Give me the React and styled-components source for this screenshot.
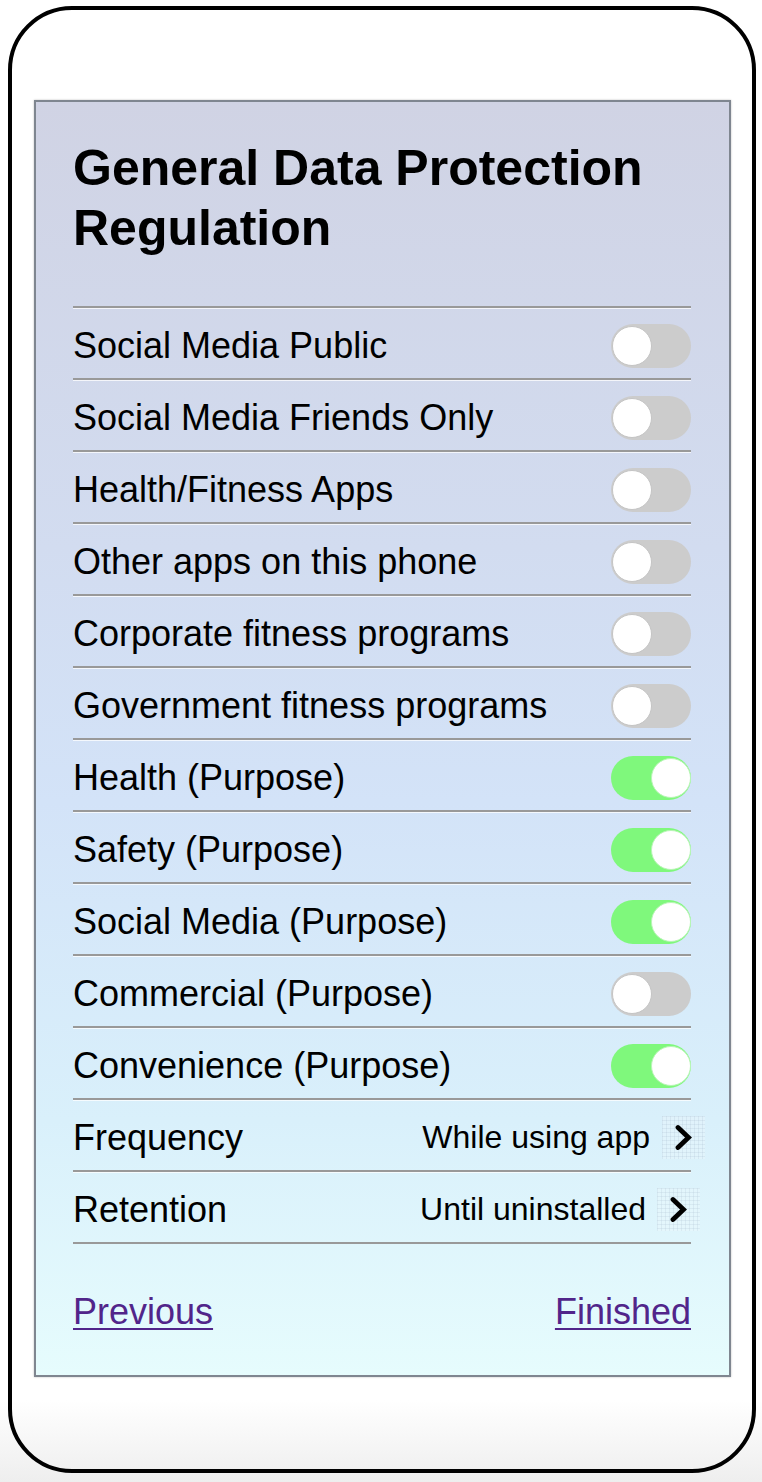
import React, { useState } from "react";
import styled, { createGlobalStyle } from "styled-components";

const GlobalStyle = createGlobalStyle`
  html, body {
    margin: 0;
    padding: 0;
  }
  body {
    min-height: 1482px;
    font-family: "Liberation Sans", Arial, Helvetica, sans-serif;
    background: linear-gradient(to bottom, #ffffff 0, #ffffff 1400px, #eeeeee 1482px);
  }
`;

const Phone = styled.div`
  box-sizing: border-box;
  width: 748px;
  height: 1467px;
  margin: 6px 0 0 8px;
  padding: 90px 0 0 22px;
  border: 4px solid #000;
  border-radius: 64px;
`;

const Panel = styled.div`
  box-sizing: border-box;
  width: 697px;
  padding: 36px 38px 42px 37px;
  border: 2px solid #7f8690;
  box-shadow: 0 0 2px rgba(0, 0, 0, 0.25);
  background: linear-gradient(
    to bottom,
    #d0d3e4 0%,
    #d2dcf0 35%,
    #d3e3f8 55%,
    #d9f0fb 80%,
    #e6fcfd 100%
  );
`;

const Title = styled.h1`
  margin: 0 0 48px;
  font-size: 50px;
  line-height: 60px;
  font-weight: 700;
  color: #000;
`;

const List = styled.div`
  border-top: 2px solid #999;
`;

const Row = styled.div`
  display: flex;
  align-items: center;
  justify-content: space-between;
  height: 70px;
  border-bottom: 2px solid #999;
  box-shadow: inset 0 1px 0 rgba(255, 255, 255, 0.75);
`;

const Label = styled.span`
  padding-top: 5px;
  font-size: 36px;
  color: #000;
  white-space: nowrap;
`;

const Track = styled.button`
  position: relative;
  box-sizing: border-box;
  width: 80px;
  height: 44px;
  margin-top: 6px;
  padding: 0;
  border: none;
  border-radius: 22px;
  background: ${(p) => (p.$on ? "#7ff87c" : "#cccccc")};
  cursor: pointer;
`;

const Knob = styled.span`
  position: absolute;
  top: 2px;
  left: ${(p) => (p.$on ? "40px" : "1px")};
  box-sizing: border-box;
  width: 40px;
  height: 40px;
  border-radius: 50%;
  background: #fff;
  border: 1px solid ${(p) => (p.$on ? "#b8f5b5" : "#c4c4c4")};
`;

const Value = styled.div`
  display: flex;
  align-items: center;
  margin-right: -14px;
  padding-top: 5px;
`;

const ValueText = styled.span`
  font-size: 32px;
  color: #000;
  white-space: nowrap;
`;

const ChevronBox = styled.span`
  display: flex;
  align-items: center;
  justify-content: center;
  width: 43px;
  height: 43px;
  margin-left: ${(p) => p.$gap}px;
  margin-right: ${(p) => p.$shift}px;
  background-color: rgba(255, 255, 255, 0.18);
  background-image: repeating-linear-gradient(
      to right,
      rgba(140, 160, 185, 0.14) 0 1px,
      transparent 1px 4px
    ),
    repeating-linear-gradient(
      to bottom,
      rgba(140, 160, 185, 0.14) 0 1px,
      transparent 1px 4px
    );
`;

const Footer = styled.div`
  display: flex;
  justify-content: space-between;
  margin-top: 47px;
`;

const NavLink = styled.a`
  font-size: 36px;
  color: #51258a;
  text-decoration: underline;
  text-decoration-thickness: 2px;
  text-underline-offset: 4px;
  cursor: pointer;
`;

const Chevron = () => (
  <svg width="17" height="27" viewBox="0 0 17 27">
    <polyline
      points="3,3.5 13.5,13.5 3,23.5"
      fill="none"
      stroke="#000"
      strokeWidth="4.8"
      strokeLinecap="round"
      strokeLinejoin="miter"
    />
  </svg>
);

const Toggle = ({ on, onClick }) => (
  <Track $on={on} onClick={onClick}>
    <Knob $on={on} />
  </Track>
);

const initial = [
  ["Social Media Public", false],
  ["Social Media Friends Only", false],
  ["Health/Fitness Apps", false],
  ["Other apps on this phone", false],
  ["Corporate fitness programs", false],
  ["Government fitness programs", false],
  ["Health (Purpose)", true],
  ["Safety (Purpose)", true],
  ["Social Media (Purpose)", true],
  ["Commercial (Purpose)", false],
  ["Convenience (Purpose)", true],
];

const choices = [
  { label: "Frequency", value: "While using app", gap: 12, shift: 0 },
  { label: "Retention", value: "Until uninstalled", gap: 11, shift: 5 },
];

const App = () => {
  const [items, setItems] = useState(initial);

  const flip = (i) =>
    setItems((prev) => prev.map((it, j) => (j === i ? [it[0], !it[1]] : it)));

  return (
    <>
      <GlobalStyle />
      <Phone>
        <Panel>
          <Title>
            General Data Protection
            <br />
            Regulation
          </Title>
          <List>
            {items.map(([label, on], i) => (
              <Row key={label}>
                <Label>{label}</Label>
                <Toggle on={on} onClick={() => flip(i)} />
              </Row>
            ))}
            {choices.map((c) => (
              <Row key={c.label}>
                <Label>{c.label}</Label>
                <Value>
                  <ValueText>{c.value}</ValueText>
                  <ChevronBox $gap={c.gap} $shift={c.shift}>
                    <Chevron />
                  </ChevronBox>
                </Value>
              </Row>
            ))}
          </List>
          <Footer>
            <NavLink>Previous</NavLink>
            <NavLink>Finished</NavLink>
          </Footer>
        </Panel>
      </Phone>
    </>
  );
};

export default App;
